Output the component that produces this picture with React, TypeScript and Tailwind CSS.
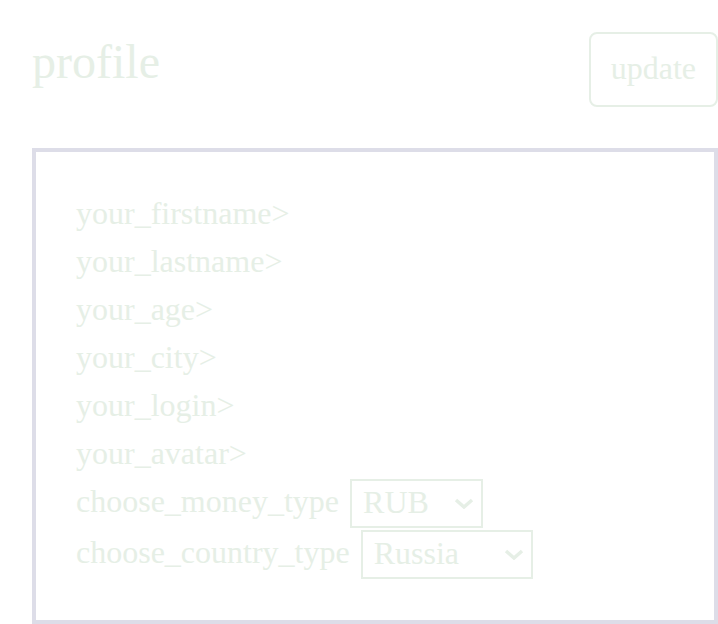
import { useState } from "react";

const fields = ["firstname", "lastname", "age", "city", "login", "avatar"];

function Chevron() {
  return (
    <svg width="20" height="11" viewBox="0 0 20 11" className="mt-[14px] shrink-0">
      <polyline points="2,2 10,9 18,2" fill="none" stroke="#e6efe6" strokeWidth="3.5" />
    </svg>
  );
}

interface ChoiceProps {
  label: string;
  value: string;
  options: string[];
  width: string;
  onChange: (v: string) => void;
}

function Choice({ label, value, options, width, onChange }: ChoiceProps) {
  const [open, setOpen] = useState(false);

  return (
    <div className="flex items-start gap-[11px]">
      <span className="leading-[48px]">{label}</span>
      <div className={`relative mt-[2px] ${width}`}>
        <button
          type="button"
          onClick={() => setOpen(!open)}
          className="flex h-[49px] w-full items-start justify-between border-2 border-[#e6efe6] bg-white pl-[11px] pr-[7px] pt-[3px] text-left"
        >
          <span className="leading-[normal]">{value}</span>
          <Chevron />
        </button>
        {open && (
          <ul className="absolute left-0 top-full z-10 w-full border-2 border-[#e6efe6] bg-white">
            {options.map((o) => (
              <li
                key={o}
                onClick={() => {
                  onChange(o);
                  setOpen(false);
                }}
                className="cursor-pointer px-[11px] hover:bg-[#f6faf6]"
              >
                {o}
              </li>
            ))}
          </ul>
        )}
      </div>
    </div>
  );
}

export default function App() {
  const [money, setMoney] = useState("RUB");
  const [country, setCountry] = useState("Russia");

  return (
    <div className="min-h-screen bg-white font-['Liberation_Serif',serif] text-[#e6efe6]">
      <div className="ml-[32px] flex w-[686px] items-start justify-between pt-[32px]">
        <h1 className="text-[48px] leading-[59px]">profile</h1>
        <button className="h-[75px] rounded-lg border-2 border-[#e6efe6] px-[20px] pb-[4px] text-[32px]">
          update
        </button>
      </div>

      <div className="ml-[32px] mt-[41px] w-[686px] border-4 border-[#dddde8] px-[40px] pb-[41px] pt-[37px] text-[32px]">
        {fields.map((f) => (
          <div key={f} className="leading-[48px]">
            your_{f}&gt;
          </div>
        ))}
        <Choice
          label="choose_money_type"
          value={money}
          options={["RUB", "USD", "EUR"]}
          width="w-[133px]"
          onChange={setMoney}
        />
        <Choice
          label="choose_country_type"
          value={country}
          options={["Russia", "Belarus", "Kazakhstan"]}
          width="w-[172px]"
          onChange={setCountry}
        />
      </div>
    </div>
  );
}
